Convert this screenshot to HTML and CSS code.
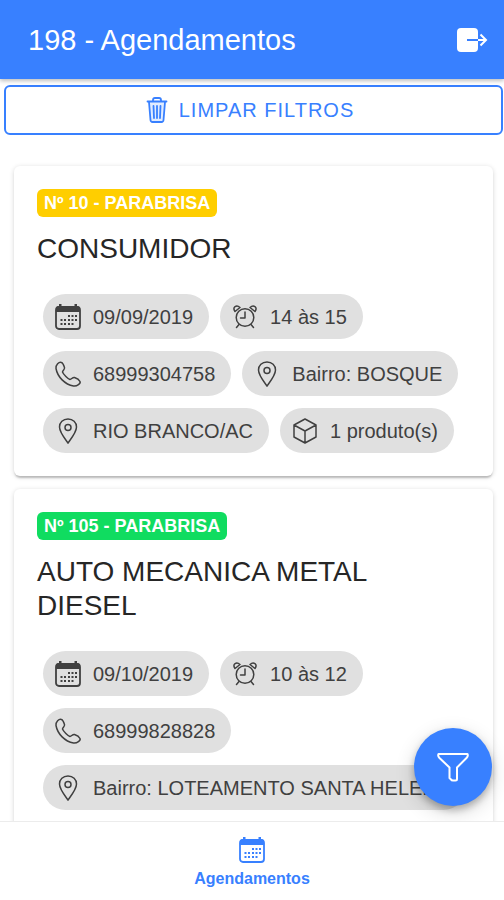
FILE: index.html
```html
<!DOCTYPE html>
<html lang="pt-BR">
<head>
<meta charset="utf-8">
<meta name="viewport" content="width=device-width, initial-scale=1">
<title>Agendamentos</title>
<link rel="stylesheet" href="styles.css">
</head>
<body>
<svg class="sprite" aria-hidden="true">
  <symbol id="calendar" viewBox="0 0 28 28">
    <rect x="2" y="4" width="24" height="22" rx="3" fill="none" stroke="currentColor" stroke-width="1.800"/>
    <path d="M2 9V6q0-3 3-3h18q3 0 3 3v3zM5 1h2.500v3H5zM20.500 1h2.500v3h-2.500z" fill="currentColor"/>
    <path d="M14 12h2v2h-2zM17.500 12h2v2h-2zM21 12h2v2h-2zM6.500 16h2v2h-2zM10 16h2v2h-2zM14 16h2v2h-2zM17.500 16h2v2h-2zM21 16h2v2h-2zM6.500 20h2v2h-2zM10 20h2v2h-2zM14 20h2v2h-2zM17.500 20h2v2h-2z" fill="currentColor"/>
  </symbol>
  <symbol id="alarm" viewBox="0 0 28 28">
    <g fill="none" stroke="currentColor" stroke-width="1.500" stroke-linecap="round" stroke-linejoin="round">
      <circle cx="14" cy="14.500" r="8.800"/>
      <path d="M14 9v6H9.500M8 21.500L5.500 24.500M20 21.500L22.500 24.500M4 8.500C1 4 5.500 1.500 9 4.500zM24 8.500C27 4 22.500 1.500 19 4.500z"/>
    </g>
  </symbol>
  <symbol id="phone" viewBox="0 0 28 28">
    <path d="M7.500 2.500C5 1.500 1.500 5 2 8.500C3.500 17 11 24.500 19.500 26C23 26.500 27 23.500 26 21.500C25 19.500 22 18 20.500 17.500C18.500 17 17.500 19.500 16 19.500C14 19 9.500 14.500 8.500 12C8.500 10.500 11 9.500 10.500 7.500C10 6 9 3 7.500 2.500Z" fill="none" stroke="currentColor" stroke-width="1.500" stroke-linejoin="round"/>
  </symbol>
  <symbol id="pin" viewBox="0 0 28 28">
    <g fill="none" stroke="currentColor" stroke-width="1.500">
      <path d="M14 2C9 2 5.500 5.500 5.500 10C5.500 15 10 20.500 14 26C18 20.500 22.500 15 22.500 10C22.500 5.500 19 2 14 2Z"/>
      <circle cx="14" cy="10.500" r="3"/>
    </g>
  </symbol>
  <symbol id="box" viewBox="0 0 28 28">
    <path d="M14 2L25 8V20L14 26L3 20V8ZM3 8L14 14L25 8M14 14V26" fill="none" stroke="currentColor" stroke-width="1.500" stroke-linejoin="round"/>
  </symbol>
  <symbol id="trash" viewBox="0 0 28 28">
    <path d="M6 6L7.500 24Q7.700 26 9.500 26H18.500Q20.300 26 20.500 24L22 6Z" fill="currentColor" fill-opacity=".15"/>
    <g fill="none" stroke="currentColor" stroke-width="1.800" stroke-linejoin="round" stroke-linecap="round">
      <path d="M4.500 5.500H23.500M10 5.500V4Q10 2 12 2H16Q18 2 18 4V5.500M6 6L7.500 24Q7.700 26 9.500 26H18.500Q20.300 26 20.500 24L22 6M10.500 10L11 22M14 10V22M17.500 10L17 22"/>
    </g>
  </symbol>
</svg>

<header class="toolbar">
  <h1 class="toolbar-title">198 - Agendamentos</h1>
  <button class="logout" type="button" aria-label="Sair">
    <svg viewBox="0 0 32 28" aria-hidden="true">
      <rect x="1" y="2" width="21" height="24" rx="4" fill="#fff"/>
      <path d="M11 14H22" stroke="#3880ff" stroke-width="2"/>
      <path d="M22 14H30M24.500 8.500L30 14L24.500 19.500" fill="none" stroke="#fff" stroke-width="2"/>
    </svg>
  </button>
</header>

<div class="content">
  <main class="scroll">
    <button class="clear" type="button"><svg class="icon" aria-hidden="true"><use href="#trash"/></svg>LIMPAR FILTROS</button>

    <article class="card">
      <span class="badge badge-warning">Nº 10 - PARABRISA</span>
      <h2 class="card-title">CONSUMIDOR</h2>
      <ul class="chips">
        <li class="chip"><svg class="icon" aria-hidden="true"><use href="#calendar"/></svg>09/09/2019</li>
        <li class="chip"><svg class="icon" aria-hidden="true"><use href="#alarm"/></svg>14 às 15</li>
        <li class="chip"><svg class="icon" aria-hidden="true"><use href="#phone"/></svg>68999304758</li>
        <li class="chip"><svg class="icon" aria-hidden="true"><use href="#pin"/></svg>Bairro: BOSQUE</li>
        <li class="chip"><svg class="icon" aria-hidden="true"><use href="#pin"/></svg>RIO BRANCO/AC</li>
        <li class="chip"><svg class="icon" aria-hidden="true"><use href="#box"/></svg>1 produto(s)</li>
      </ul>
    </article>

    <article class="card">
      <span class="badge badge-success">Nº 105 - PARABRISA</span>
      <h2 class="card-title">AUTO MECANICA METAL DIESEL</h2>
      <ul class="chips">
        <li class="chip"><svg class="icon" aria-hidden="true"><use href="#calendar"/></svg>09/10/2019</li>
        <li class="chip"><svg class="icon" aria-hidden="true"><use href="#alarm"/></svg>10 às 12</li>
        <li class="chip"><svg class="icon" aria-hidden="true"><use href="#phone"/></svg>68999828828</li>
        <li class="chip"><svg class="icon" aria-hidden="true"><use href="#pin"/></svg>Bairro: LOTEAMENTO SANTA HELENA</li>
      </ul>
    </article>
  </main>
  <button class="fab" type="button" aria-label="Filtrar">
    <svg viewBox="0 0 34 34" aria-hidden="true">
      <path d="M2.500 4H31.500Q32.500 6 30.500 8L21 17.500V29Q21 30.500 19.500 30.500H17Q15.500 30.500 15 29.500L13.500 28V17.500L3.500 8Q1.500 6 2.500 4Z" fill="none" stroke="currentColor" stroke-width="2" stroke-linejoin="round"/>
    </svg>
  </button>
</div>

<nav class="tabs">
  <a class="tab" href="#"><svg class="icon" aria-hidden="true"><use href="#calendar"/></svg>Agendamentos</a>
</nav>
</body>
</html>
```

FILE: styles.css
```css
* {
  box-sizing: border-box;
}

body {
  display: flex;
  flex-direction: column;
  height: 100vh;
  margin: 0;
  overflow: hidden;
  background: #fff;
  color: #262626;
  font-family: "Liberation Sans", Arial, sans-serif;
}

button {
  font-family: inherit;
  cursor: pointer;
}

.sprite {
  position: absolute;
  width: 0;
  height: 0;
}

.icon {
  flex: none;
  width: 28px;
  height: 28px;
}

.toolbar {
  display: flex;
  align-items: center;
  justify-content: space-between;
  height: 79px;
  padding: 0 16px 0 28px;
  background: #3880ff;
  color: #fff;
  box-shadow: 0 2px 4px rgba(0, 0, 0, 0.25);
  z-index: 1;
}

.toolbar-title {
  margin: 0;
  font-size: 29px;
  font-weight: 400;
  line-height: 34px;
}

.logout {
  display: flex;
  padding: 0;
  border: 0;
  background: none;
}

.logout svg {
  width: 32px;
  height: 28px;
}

.content {
  position: relative;
  flex: 1;
  min-height: 0;
}

.scroll {
  height: 100%;
  overflow: hidden;
  padding: 6px 0 0;
}

.clear {
  display: flex;
  align-items: center;
  justify-content: center;
  gap: 8px;
  width: calc(100% - 5px);
  height: 50px;
  margin: 0 0 31px 4px;
  padding: 0 16px 0 6px;
  border: 2px solid #3880ff;
  border-radius: 6px;
  background: #fff;
  color: #3880ff;
  font-size: 20px;
  letter-spacing: 1px;
}

.card {
  margin: 0 11px 13px 14px;
  padding: 23px;
  border-radius: 6px;
  background: #fff;
  box-shadow: 0 3px 2px -1px rgba(0, 0, 0, 0.2), 0 1px 5px rgba(0, 0, 0, 0.16);
}

.badge {
  display: block;
  width: fit-content;
  padding: 0 7px;
  border-radius: 6px;
  color: #fff;
  font-size: 18px;
  font-weight: 700;
  line-height: 28px;
}

.badge-warning {
  background: #ffce00;
}

.badge-success {
  background: #10dc60;
}

.card-title {
  margin: 15px 0 28px;
  font-size: 28px;
  font-weight: 400;
  line-height: 34px;
}

.chips {
  display: flex;
  flex-wrap: wrap;
  gap: 12px 11px;
  margin: 0;
  padding: 0 0 0 6px;
  list-style: none;
}

.chip {
  display: flex;
  align-items: center;
  gap: 11px;
  height: 45px;
  max-width: 100%;
  padding: 0 16px 0 11px;
  overflow: hidden;
  border-radius: 23px;
  background: #e0e0e0;
  color: #404040;
  font-size: 20px;
  line-height: 24px;
  white-space: nowrap;
}

.fab {
  position: absolute;
  right: 12px;
  bottom: 15px;
  display: flex;
  align-items: center;
  justify-content: center;
  width: 78px;
  height: 78px;
  padding: 0;
  border: 0;
  border-radius: 50%;
  background: #3880ff;
  color: #fff;
  box-shadow: 0 4px 7px rgba(0, 0, 0, 0.25), 0 6px 20px rgba(0, 0, 0, 0.16);
}

.fab svg {
  width: 34px;
  height: 34px;
}

.tabs {
  display: flex;
  justify-content: center;
  height: 79px;
  padding-top: 4px;
  border-top: 1px solid #ececec;
  background: #fff;
  z-index: 1;
}

.tab {
  display: flex;
  flex-direction: column;
  align-items: center;
  justify-content: center;
  gap: 4px;
  color: #3880ff;
  font-size: 16px;
  font-weight: 700;
  line-height: 22px;
  text-decoration: none;
}
```
